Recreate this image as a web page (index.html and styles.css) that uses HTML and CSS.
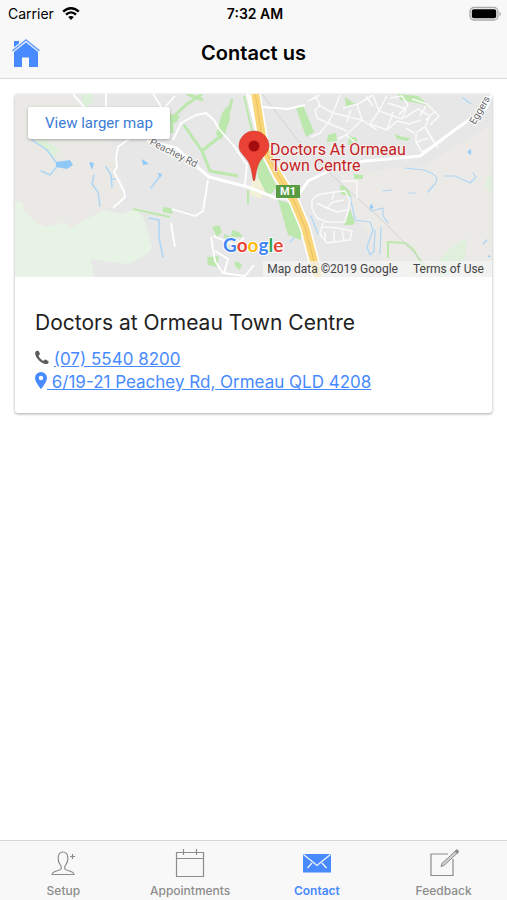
FILE: index.html
```html
<!DOCTYPE html>
<html lang="en">
<head>
  <meta charset="UTF-8">
  <meta name="viewport" content="width=device-width, initial-scale=1">
  <title>Contact us</title>
  <link rel="stylesheet" href="styles.css">
</head>
<body>
  <header class="header">
    <div class="status-bar">
      <div class="carrier">
        <span>Carrier</span>
        <svg class="wifi" width="18" height="14" viewBox="0 0 18 14" fill="none" stroke="#000" stroke-width="2.4">
          <path d="M1.2 4.700C5.800.1 12.200.1 16.800 4.700M4 7.700c3-2.900 7-2.900 10 0"/>
          <path d="M9 12.900 6.200 10.100c1.600-1.500 4-1.500 5.600 0z" fill="#000" stroke="none"/>
        </svg>
      </div>
      <span class="time">7:32 AM</span>
      <svg class="battery" width="33" height="16" viewBox="0 0 33 16">
        <rect x="1" y="1.500" width="28" height="12.500" rx="4" fill="#f8f8f8" stroke="#aaa" stroke-width="1.300"/>
        <rect x="2.800" y="3.300" width="24.400" height="9" rx="2" fill="#000"/>
        <path d="M30.500 6v4c2-.8 2-3.200 0-4z" fill="#aaa"/>
      </svg>
    </div>
    <div class="nav">
      <a href="#home" class="home-link" aria-label="Home">
        <svg width="30" height="30" viewBox="0 0 30 30" fill="#488aff">
          <path d="M3 3h5v5l-5 4z"/>
          <path d="M15 3.500 3 13v16h8v-9.500h7V29h9V13z"/>
          <path d="M1.500 12.800 15 2l13.500 10.800" fill="none" stroke="#f8f8f8" stroke-width="3.600"/>
          <path d="M1.500 12.800 15 2l13.500 10.800" fill="none" stroke="#6a9ffb" stroke-width="1.600"/>
        </svg>
      </a>
      <h1>Contact us</h1>
    </div>
  </header>

  <main class="content">
    <section class="card">
      <div class="map">
        <svg class="map-canvas" viewBox="15 94 477 183" preserveAspectRatio="xMidYMid slice" role="img" aria-label="Map of Ormeau">
          <rect x="15" y="94" width="477" height="183" fill="#e7e7e7"/>
          <!-- land -->
          <path d="M15 94h58l14 14 23 32 6 22 9 28-5 15-20 6-20 25H15z" fill="#ebe9e5"/>
          <path d="M492 125l-50 30-20 11-82 8 3 20 50 83h99z" fill="#ebeae7"/>
          <path d="M15 202h7l2 8 11 12 12 5 18-5 5 6 34-18 18 4 15-5 7 10 8 28-3 6-20 11-20-2-18-3 3 18H15z" fill="#e7f3e5"/>
          <path d="M81 94h12v7l-8 8zM34 140h12l13 10-5 8z" fill="#dcefd8"/>
          <path d="M467 238l-2 22-20 17h-8l-1-13 14-15zM492 174c-7 4-8 12-4 16l4 2z" fill="#e0efdc"/>
          <path d="M252 180l10-3 3 12-4 10-11-4z" fill="#f3f0d8"/>

          <!-- parks -->
          <g fill="none" stroke="#bce8ad" stroke-width="3" stroke-linejoin="round">
            <path d="M202 94l-15 10-15 14v15M187 94l16 6M184 125l18 26 22-18 8-34M202 151l8 20 28 5"/>
            <path d="M244 96l8 35M248 190v14M133 209l37 8" stroke-width="2"/>
            <path d="M388 258v-16l17 1 8 6 12 20" stroke-width="2"/>
          </g>
          <g fill="#bce8ad">
            <path d="M222 113l6-8 2 15-9 20-5-6zM256 135l8 26 13 26-9 10-10-20zM278 200l14 4 9 19v17l-13-5zM296 108l7-3 11 27-8 5zM212 227l7-2 3 7-5 5zM232 230l7 2 4 5h-12zM224 234l8 3-7 6zM207 257l12-1-2 11-9-2zM235 261l7 3-2 6-5-4zM170 114l10 2-4 7-6-1zM163 207l8 1 2 6-10-2z"/>
            <path d="M328 135l8-2 1 8-10 1zM349 136l8 2v7h-9zM345 97l10 7-9 4zM398 94l20 2 12 10-18-4-12-2zM395 134l7 3 9 1-4 3-10-2zM354 174l9 1v4h-9zM340 185l7 3 5 9-11-3zM350 209l5 14-2 2h-9z"/>
          </g>

          <!-- creeks and ponds -->
          <g fill="none" stroke="#add6f5" stroke-linecap="round" stroke-linejoin="round">
            <path d="M32 140l15 10 11 15-8 10-9-4M94 175l-2 9 6 8 2 14M106 167l5 8 1 12M111 179h4M160 176l-9 12M149 218l10 2v18l4 19" stroke-width="1.500"/>
            <path d="M350 196l5 24 15 2 3 8-6 17 3 8 4-4 1-21M370 210l2-6M371 211l12-3v8l5 7M381 227l-1 27M405 168l19 2c14 5 16 9 9 16l-5 6M392 190l-9 1M409 193h7M445 176h10l15 7 6-6-3-4M487 240l-4 4M463 98l8 6M311 216l7 18M290 242l4-4" stroke-width="1.200"/>
          </g>
          <g fill="#8fc9f8">
            <path d="M56 162l14-2 3 5-6 4-11-2zM89 162l5 1-2 7zM142 159l7 5-6 1zM158 173l4 1-2 4zM467 152l4-3v6zM370 205l4 2-4 3zM488 255l3 2h-3z"/>
          </g>

          <!-- railway -->
          <path d="M262 94l35 45 29 31 20 18 35 31 48 49 10 9" fill="none" stroke="#d2d2d2" stroke-width="1"/>

          <!-- local roads -->
          <g fill="none" stroke="#fff" stroke-width="1.800" stroke-linejoin="round">
            <path d="M73 94l13 15M106 94v14M130 138l-12 9-2 10 1 10-3 5 10 19 1 6-12 11M153 94l9 14M165 107l10-11M173 140l8-17 15-8 10-2 8 7 5 9 15 17 12 18M247 163l-2 22M208 180l-5 31-8 5-23-7M211 237l4 24 8 12 22 3 9-11M213 236l22 9 9-7M224 273l4-14-13-8M171 223l4 24M263 107l25 2 17-4"/>
          </g>
          <g fill="none" stroke="#fafafa" stroke-width="1.500" stroke-linejoin="round">
            <path d="M315 95l5 10-5 5 2 8 11 5 5-10-15-8M308 101l12-6M333 113l7-18M328 123l-8 10-9 4M333 113l29 7-16 15 9 7M328 123l19 8M343 108l15-4 15-9M357 104l5 16 15 10M373 95l6 16-9 13M387 95l-8 16 23 8 4-10-18-6M393 112l-6 18-17-6M387 130l10-9 12 3 12-4M347 122l4-12M338 139l8-4M366 96l7 10"/>
            <path d="M390 98l12-2 6 9-9 10M404 118l14-9 12 7-5 11 13 21M412 99l15 5 12 12-9 9M420 116l6-10M426 120l8-8M417 132l8-5M427 131l6 10M416 132v10l6 10 8-4M417 142l11-4M406 128l8 5"/>
            <path d="M312 200l5-5 17-3 11-1 5 9-2 11-3 11h-18l-10-4-5-9zM317 203l10 5 6-6 11-2M327 208l10 4 10-2M323 223l-3 11 7 9 23-3 2-9-14-3-17-1M325 232v9M334 231v11M342 230l2 11M334 192l-2 8M341 181h16v18"/>
          </g>
          <g fill="none" stroke="#fff" stroke-linejoin="round" stroke-linecap="round">
            <path d="M148 141l28 7 33 29 39 10 28 11h12" stroke-width="3"/>
            <path d="M300 193l8-12 25-12 31-8 36-3 20-2 36-27 30-21 6-14" stroke-width="3"/>
          </g>

          <!-- motorway -->
          <path d="M247 92l9 36 6 24 12 22 18 31 12 25 9 49" fill="none" stroke="#fff" stroke-width="3"/>
          <path d="M255 92l5 32 4 24 14 27 16 26 11 26 13 50" fill="none" stroke="#fff" stroke-width="11"/>
          <path d="M255 92l5 32 4 24 14 27 16 26 11 26 13 50" fill="none" stroke="#f8d679" stroke-width="8"/>
          <path d="M255 92l5 32 4 24 14 27 16 26 11 26 13 50" fill="none" stroke="#edbf60" stroke-width="1"/>

          <rect x="276" y="185" width="24" height="13" fill="#579b43"/>
          <text class="road-shield" x="288" y="195" text-anchor="middle">M1</text>
          <text class="road-name" transform="translate(149 144) rotate(27)">Peachey Rd</text>
          <text class="road-name" transform="translate(475 125) rotate(-60)">Eggers</text>

          <!-- marker -->
          <path d="M254 181c-1.500 0-1.300-12-6-20-4-6-9-9-9-15a15 15 0 0 1 30 0c0 6-5 9-9 15-4.700 8-4.500 20-6 20z" fill="#ea4335" stroke="#c93529" stroke-width=".6"/>
          <circle cx="254" cy="146" r="5.500" fill="#a50e0e"/>
          <text class="place-name" x="270" y="155">Doctors At Ormeau</text>
          <text class="place-name" x="271" y="171">Town Centre</text>
          <text class="google" x="223" y="252"><tspan fill="#4285f4">G</tspan><tspan fill="#ea4335">o</tspan><tspan fill="#fbbc05">o</tspan><tspan fill="#4285f4">g</tspan><tspan fill="#34a853">l</tspan><tspan fill="#ea4335">e</tspan></text>
        </svg>
        <a href="#map" class="larger-map">View larger map</a>
        <div class="map-footer">
          <span>Map data ©2019 Google</span>
          <a href="#terms">Terms of Use</a>
        </div>
      </div>
      <div class="card-content">
        <h2>Doctors at Ormeau Town Centre</h2>
        <p>
          <svg class="phone-icon" width="14" height="15" viewBox="0 0 15 15" fill="#5c5c5c">
            <path d="M1.300.5 3.200.2c.8 0 2.300 3 2 3.700-.2.700-1.400 1-1.300 1.700.4 1.800 3.200 4.800 5.100 5.300.8.200 1.200-1.100 1.900-1.200.9-.1 3.800 1.700 3.800 2.500 0 1.400-1.600 2.400-3 2.300C6.500 14.100.4 7.800.2 3.200.1 2 .5.900 1.300.5z"/>
          </svg>
          <a href="tel:0755408200">(07) 5540 8200</a>
        </p>
        <p>
          <a href="#directions"><svg class="pin-icon" width="12" height="17" viewBox="0 0 12 17" fill="#488aff" fill-rule="evenodd">
            <path d="M6 0a6 6 0 0 1 6 6c0 4.300-6 11-6 11S0 10.300 0 6a6 6 0 0 1 6-6zm0 3.800a2.200 2.200 0 1 0 0 4.400 2.200 2.200 0 0 0 0-4.400z"/>
          </svg> 6/19-21 Peachey Rd, Ormeau QLD 4208</a>
        </p>
      </div>
    </section>
  </main>

  <nav class="tabs">
    <a href="#setup" class="tab">
      <svg width="30" height="30" viewBox="0 0 30 30" fill="none" stroke="#8c8c8c" stroke-width="1.200">
        <path d="M4 26.500c.3-4 7.500-3.300 9-5.500.7-1.300.2-3-1-4.500-1.600-2-2-4-1.800-7C10.400 6 12 4 15 4s4.600 2 4.800 5.500c.2 3-.2 5-1.800 7-1.200 1.500-1.700 3.200-1 4.500 1.500 2.200 8.700 1.500 9 5.500z"/>
        <path d="M24.500 6v5M22 8.500h5"/>
      </svg>
      <span>Setup</span>
    </a>
    <a href="#appointments" class="tab">
      <svg width="30" height="30" viewBox="0 0 30 30" fill="none" stroke="#8c8c8c" stroke-width="1.200">
        <path d="M1.500 4.500h27v24h-27zM1.500 10.500h27M8.500 1v6M21.500 1v6"/>
      </svg>
      <span>Appointments</span>
    </a>
    <a href="#contact" class="tab active">
      <svg width="30" height="30" viewBox="0 0 30 30">
        <path d="M1 6h28v18.500H1z" fill="#488aff"/>
        <path d="M1.500 6.500 12 15l3 2.500 3-2.500L28.500 6.500M10 15l-4.500 5M20 15l4.500 5" fill="none" stroke="#f8f8f8" stroke-width="1.200"/>
      </svg>
      <span>Contact</span>
    </a>
    <a href="#feedback" class="tab">
      <svg width="30" height="30" viewBox="0 0 30 30" fill="none" stroke="#8c8c8c" stroke-width="1.200">
        <path d="M19 6H2v21.500h22V11"/>
        <path d="M12 18.500l1-3.200L26 3.500l1.800 2L15 17.500z" fill="#d0d0d0" stroke-width="1"/>
        <path d="M26.500 3 28 1.800l1.500 1.700-1 1.500z" fill="#8c8c8c"/>
      </svg>
      <span>Feedback</span>
    </a>
  </nav>
</body>
</html>
```

FILE: styles.css
```css
* {
  box-sizing: border-box;
}

body {
  margin: 0;
  min-height: 100vh;
  display: flex;
  flex-direction: column;
  background: #fff;
  color: #222;
  font-family: Inter, "Liberation Sans", sans-serif;
}

.header {
  background: #f8f8f8;
  border-bottom: 1px solid #dcdcdc;
  color: #000;
}

.status-bar {
  display: grid;
  grid-template-columns: 1fr auto 1fr;
  align-items: center;
  height: 27px;
  padding: 0 5px 0 8px;
  font-size: 14px;
}

.carrier {
  display: flex;
  align-items: center;
  gap: 8px;
}

.time {
  font-weight: 600;
}

.battery {
  justify-self: end;
}

.nav {
  display: grid;
  grid-template-columns: 1fr auto 1fr;
  align-items: center;
  height: 51px;
  padding: 0 11px;
}

.home-link {
  display: flex;
}

.nav h1 {
  margin: 0;
  font-size: 20px;
  font-weight: 600;
}

.content {
  flex: 1;
  padding: 15px;
}

.card {
  border-radius: 3px;
  overflow: hidden;
  background: #fff;
  box-shadow: 0 1px 3px rgba(0, 0, 0, 0.35);
}

/* Map */
.map {
  position: relative;
  height: 183px;
}

.map-canvas {
  display: block;
  width: 100%;
  height: 100%;
  font-family: Roboto, sans-serif;
}

.road-shield {
  font-size: 11px;
  font-weight: 700;
  fill: #fff;
}

.road-name {
  font-size: 10px;
  fill: #666;
  stroke: #fff;
  stroke-width: 2px;
  paint-order: stroke;
}

.place-name {
  font-size: 16px;
  fill: #c5221f;
  stroke: #f3f0ee;
  stroke-width: 2px;
  paint-order: stroke;
}

.google {
  font-family: Lato, sans-serif;
  font-size: 19px;
  font-weight: 700;
  stroke: #fff;
  stroke-width: 2px;
  paint-order: stroke;
}

.larger-map {
  position: absolute;
  top: 13px;
  left: 13px;
  padding: 0 17px;
  border-radius: 2px;
  background: #fff;
  box-shadow: 0 1px 3px rgba(0, 0, 0, 0.3);
  color: #3a7bd5;
  font-family: Roboto, sans-serif;
  font-size: 15px;
  line-height: 32px;
  text-decoration: none;
}

.map-footer {
  position: absolute;
  right: 0;
  bottom: 0;
  display: flex;
  gap: 15px;
  padding: 0 8px 0 4px;
  background: rgba(245, 245, 245, 0.7);
  color: #444;
  font-family: Roboto, sans-serif;
  font-size: 12px;
  line-height: 16px;
}

.map-footer a {
  color: #444;
  text-decoration: none;
}

/* Card details */
.card-content {
  padding: 32px 20px 19px;
}

.card-content h2 {
  margin: 0 0 11px;
  font-size: 21px;
  font-weight: 400;
  line-height: 28px;
}

.card-content p {
  margin: 0;
  font-size: 17px;
  line-height: 23px;
}

.card-content a {
  color: #488aff;
}

.pin-icon {
  vertical-align: -1px;
}

/* Bottom tabs */
.tabs {
  display: grid;
  grid-template-columns: repeat(4, 1fr);
  height: 60px;
  border-top: 1px solid #d8d8d8;
  background: #f8f8f8;
}

.tab {
  display: flex;
  flex-direction: column;
  align-items: center;
  gap: 5px;
  padding-top: 7px;
  color: #8c8c8c;
  font-size: 12px;
  font-weight: 500;
  line-height: 16px;
  text-decoration: none;
}

.tab.active {
  color: #488aff;
  font-weight: 600;
}
```
